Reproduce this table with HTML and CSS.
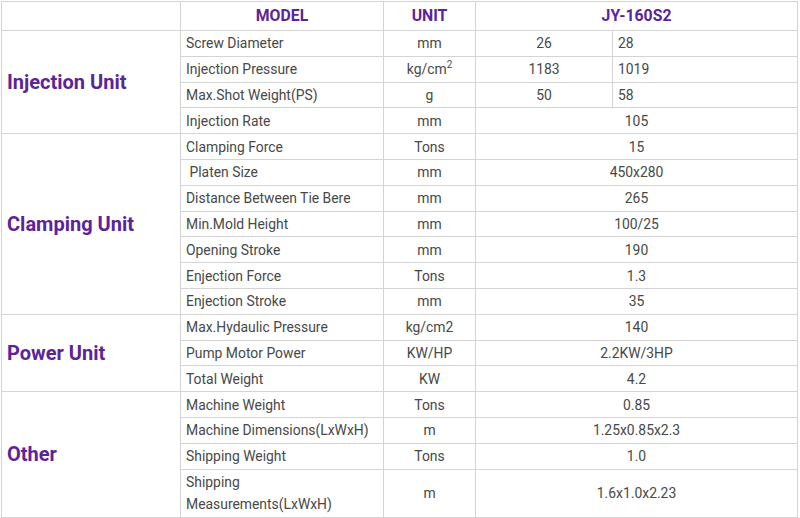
FILE: index.html
```html
<!DOCTYPE html>
<html>
<head>
<meta charset="utf-8">
<link rel="stylesheet" href="styles.css">
</head>
<body>
<table class="spec">
  <colgroup>
    <col class="c-group">
    <col class="c-name">
    <col class="c-unit">
    <col class="c-v1">
    <col class="c-v2">
  </colgroup>
  <thead>
    <tr class="head">
      <th></th>
      <th>MODEL</th>
      <th>UNIT</th>
      <th colspan="2">JY-160S2</th>
    </tr>
  </thead>
  <tbody>
    <tr>
      <td class="group" rowspan="4">Injection Unit</td>
      <td class="name">Screw Diameter</td>
      <td class="unit">mm</td>
      <td class="v1">26</td>
      <td class="v2">28</td>
    </tr>
    <tr>
      <td class="name">Injection Pressure</td>
      <td class="unit">kg/cm<sup>2</sup></td>
      <td class="v1">1183</td>
      <td class="v2">1019</td>
    </tr>
    <tr>
      <td class="name">Max.Shot Weight(PS)</td>
      <td class="unit">g</td>
      <td class="v1">50</td>
      <td class="v2">58</td>
    </tr>
    <tr>
      <td class="name">Injection Rate</td>
      <td class="unit">mm</td>
      <td class="val" colspan="2">105</td>
    </tr>
    <tr>
      <td class="group" rowspan="7">Clamping Unit</td>
      <td class="name">Clamping Force</td>
      <td class="unit">Tons</td>
      <td class="val" colspan="2">15</td>
    </tr>
    <tr>
      <td class="name">&nbsp;Platen Size</td>
      <td class="unit">mm</td>
      <td class="val" colspan="2">450x280</td>
    </tr>
    <tr>
      <td class="name">Distance Between Tie Bere</td>
      <td class="unit">mm</td>
      <td class="val" colspan="2">265</td>
    </tr>
    <tr>
      <td class="name">Min.Mold Height</td>
      <td class="unit">mm</td>
      <td class="val" colspan="2">100/25</td>
    </tr>
    <tr>
      <td class="name">Opening Stroke</td>
      <td class="unit">mm</td>
      <td class="val" colspan="2">190</td>
    </tr>
    <tr>
      <td class="name">Enjection Force</td>
      <td class="unit">Tons</td>
      <td class="val" colspan="2">1.3</td>
    </tr>
    <tr>
      <td class="name">Enjection Stroke</td>
      <td class="unit">mm</td>
      <td class="val" colspan="2">35</td>
    </tr>
    <tr>
      <td class="group" rowspan="3">Power Unit</td>
      <td class="name">Max.Hydaulic Pressure</td>
      <td class="unit">kg/cm2</td>
      <td class="val" colspan="2">140</td>
    </tr>
    <tr>
      <td class="name">Pump Motor Power</td>
      <td class="unit">KW/HP</td>
      <td class="val" colspan="2">2.2KW/3HP</td>
    </tr>
    <tr>
      <td class="name">Total Weight</td>
      <td class="unit">KW</td>
      <td class="val" colspan="2">4.2</td>
    </tr>
    <tr>
      <td class="group" rowspan="4">Other</td>
      <td class="name">Machine Weight</td>
      <td class="unit">Tons</td>
      <td class="val" colspan="2">0.85</td>
    </tr>
    <tr>
      <td class="name">Machine Dimensions(LxWxH)</td>
      <td class="unit">m</td>
      <td class="val" colspan="2">1.25x0.85x2.3</td>
    </tr>
    <tr>
      <td class="name">Shipping Weight</td>
      <td class="unit">Tons</td>
      <td class="val" colspan="2">1.0</td>
    </tr>
    <tr class="tall">
      <td class="name">Shipping<br>Measurements(LxWxH)</td>
      <td class="unit">m</td>
      <td class="val" colspan="2">1.6x1.0x2.23</td>
    </tr>
  </tbody>
</table>
</body>
</html>
```

FILE: styles.css
```css
html, body {
  margin: 0;
  padding: 0;
  background: #ffffff;
}

body {
  padding: 1px 0 0 1px;
  font-family: Roboto, "Liberation Sans", sans-serif;
  color: #484848;
}

.spec {
  border-collapse: collapse;
  table-layout: fixed;
  width: 797px;
  font-size: 13.9px;
}

.c-group { width: 179px; }
.c-name { width: 203px; }
.c-unit { width: 92px; }
.c-v1 { width: 137px; }
.c-v2 { width: 185px; }

.spec th,
.spec td {
  border: 1px solid #d4d4d4;
  padding: 0 5px;
  vertical-align: middle;
  line-height: 22px;
}

.spec tr {
  height: 25.8px;
}

.spec .head {
  height: 29px;
}

.spec th {
  color: #5b2499;
  font-weight: 700;
  font-size: 15.8px;
  text-align: center;
}

.group {
  color: #5b2499;
  font-weight: 700;
  font-size: 20px;
}

.name {
  text-align: left;
}

.unit {
  text-align: center;
}

.unit sup {
  font-size: 10px;
  line-height: 0;
  vertical-align: 6px;
}

.v1 {
  text-align: center;
}

.v2 {
  text-align: left;
}

.val {
  text-align: center;
}

.spec .tall {
  height: 48px;
}
```
